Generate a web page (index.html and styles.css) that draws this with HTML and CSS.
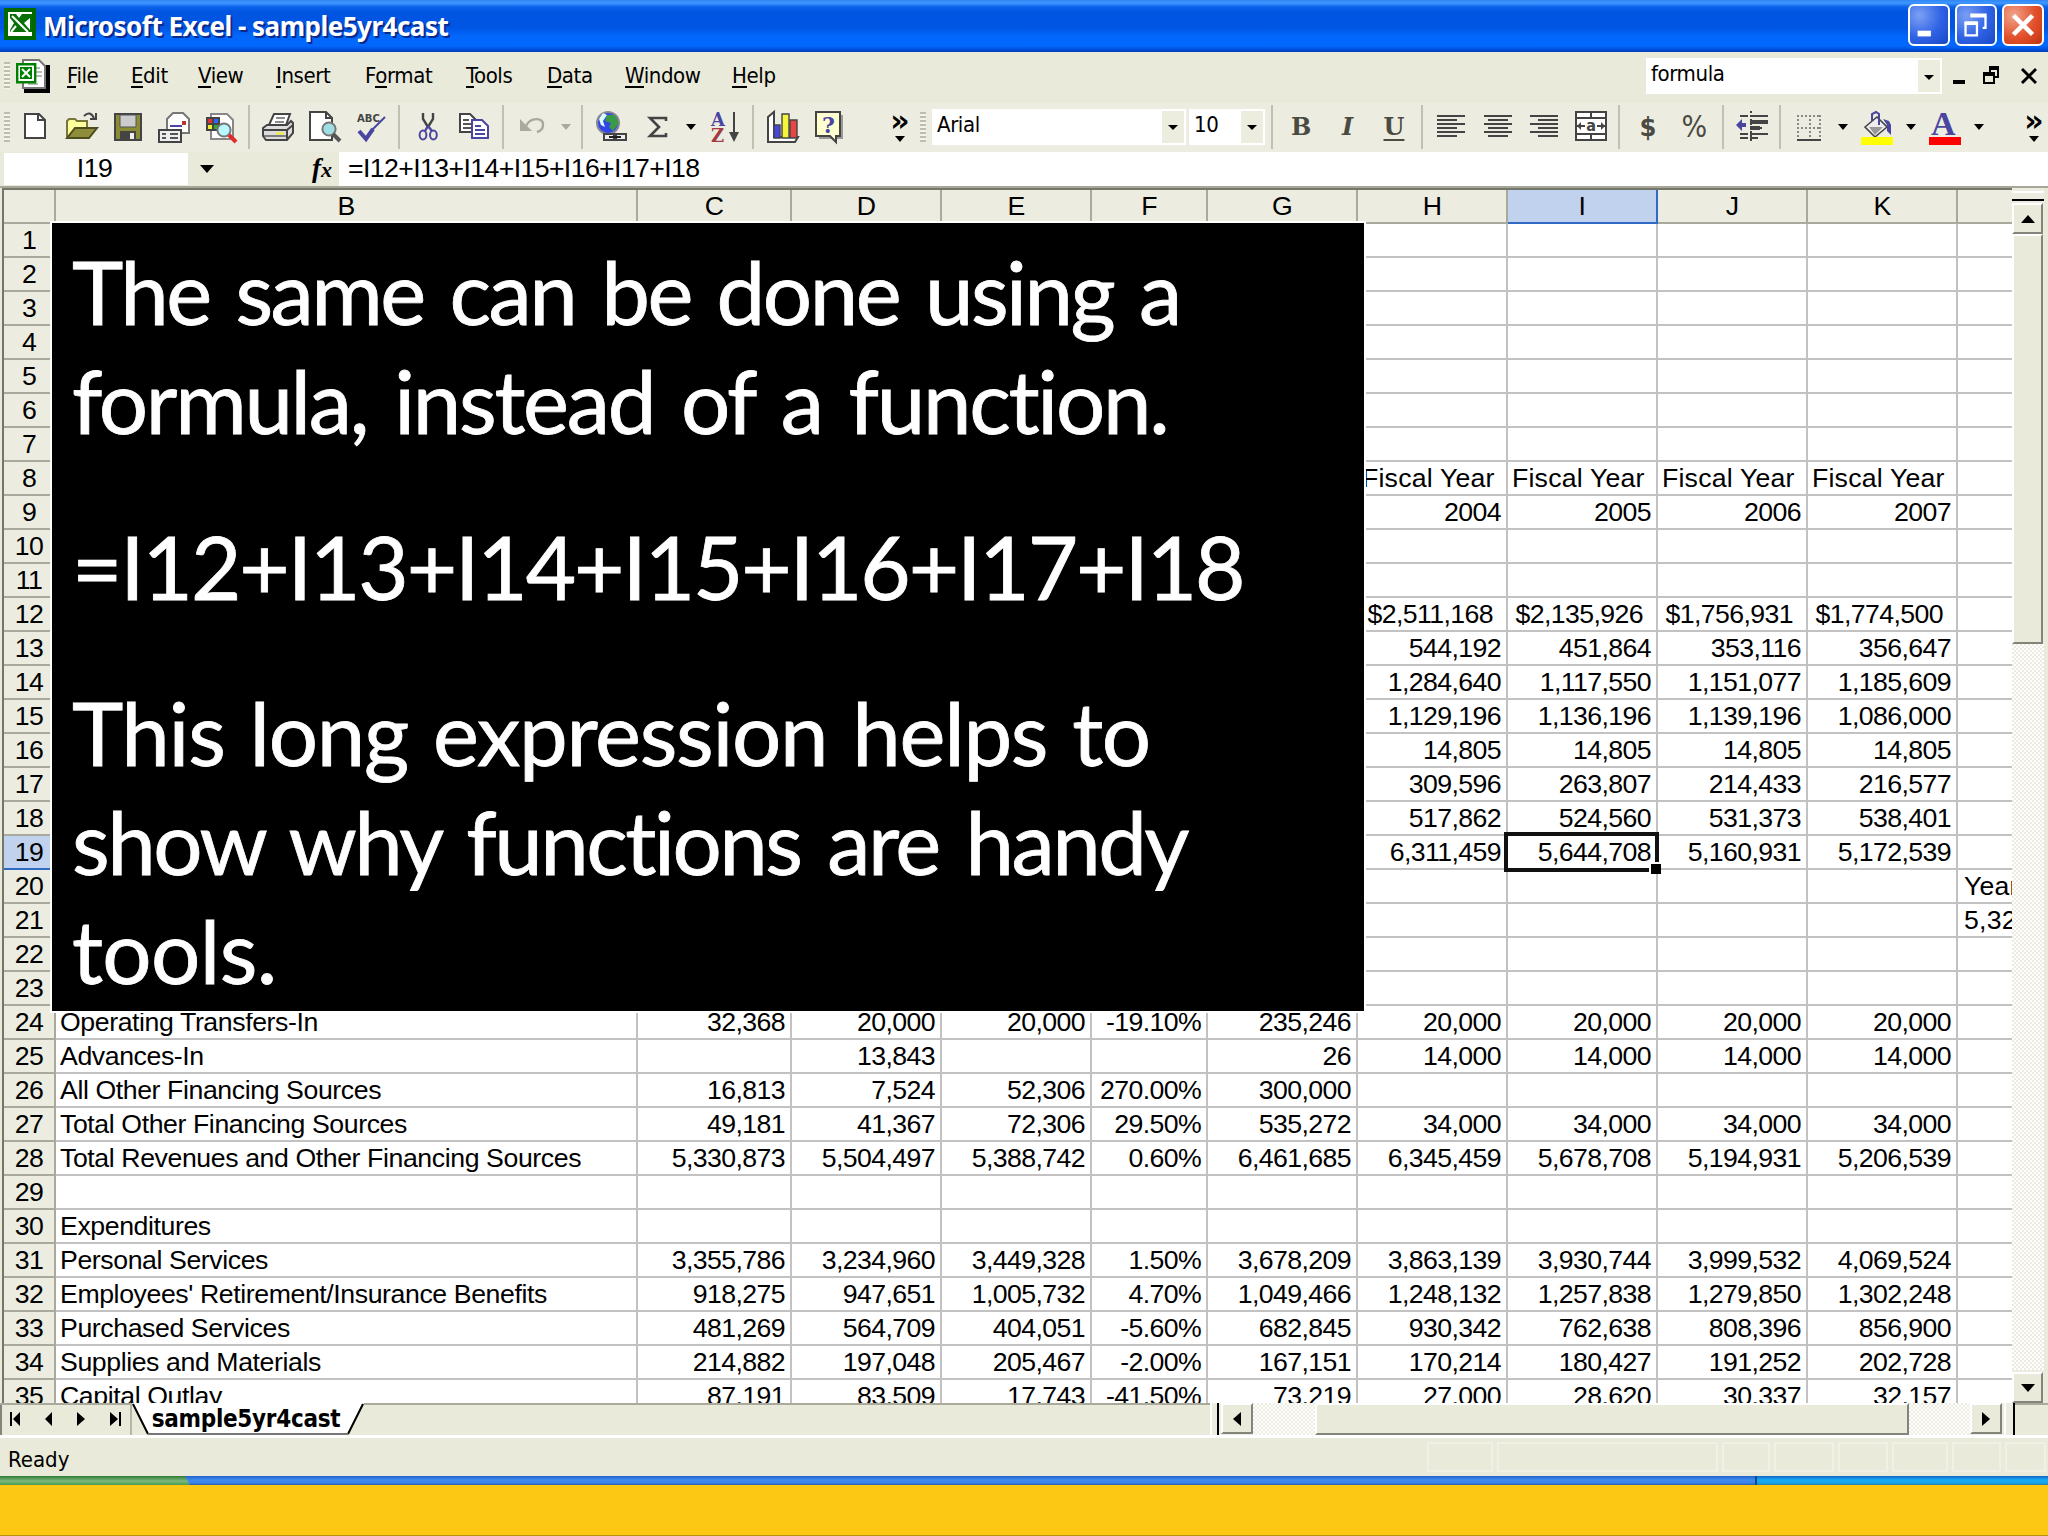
FILE: index.html
```html
<!DOCTYPE html>
<html lang="en">
<head>
    <meta charset="UTF-8">
    <title>Microsoft Excel - sample5yr4cast</title>
    <link rel="stylesheet" href="styles.css">
</head>
<body>
    <header class="titlebar">
        <svg class="app-icon" viewBox="0 0 16 16"><path fill="#006a00" d="M0 0h16v16H0z"/><path fill="#fff" d="M2 2h12v12H2z"/><path fill="#067006" d="M3 3h11v9H3z"/><path fill="#fff" d="M6 3h3L7.500 5zM13 5v6l-3-3.500zM3 5l2 2.500L3 11z"/><path stroke="#fff" stroke-width="1" d="M4 4l8 8M6 9l-2.500 3"/></svg>
        <h1>Microsoft Excel - sample5yr4cast</h1>
        <div class="window-buttons">
            <button class="win"><svg viewBox="0 0 20 20"><path fill="#fff" d="M4 13h7v3H4z"/></svg></button>
            <button class="win"><svg viewBox="0 0 20 20"><path fill="none" stroke="#fff" stroke-width="1.200" d="M4.500 9h6v6.500h-6zM13.500 11.500h1.500v-6"/><path fill="#fff" d="M4 8h7v2H4zM7 4h8.600v2H7z"/></svg></button>
            <button class="win close"><svg viewBox="0 0 20 20"><path stroke="#fff" stroke-width="2.400" d="M5 5l10 10M15 5L5 15"/></svg></button>
        </div>
    </header>

    <nav class="menubar">
        <span class="grip"></span>
        <svg class="doc-icon" viewBox="0 0 17 17"><path d="M5 3h12v14H4v-2h11z"/><path fill="#fff" stroke="#777" d="M3.500.500h8l3 3v11h-11z"/><path stroke="#bbb" d="M10 4.500h2M10 6.500h3M10 8.500h3M6 12.500h5"/><path fill="#fff" stroke="#008000" stroke-width="1.200" d="M.600 2.600h9v9h-9z"/><path fill="#008000" d="M2 4h6v6H2z"/><path stroke="#fff" d="M3 5l4 4M7 5L3 9"/></svg>
        <ul>
            <li class="file"><u>F</u>ile</li>
            <li class="edit"><u>E</u>dit</li>
            <li class="view"><u>V</u>iew</li>
            <li class="insert"><u>I</u>nsert</li>
            <li class="format">F<u>o</u>rmat</li>
            <li class="tools"><u>T</u>ools</li>
            <li class="data"><u>D</u>ata</li>
            <li class="window"><u>W</u>indow</li>
            <li class="help"><u>H</u>elp</li>
        </ul>
        <div class="combo ask">formula<span class="drop"><i class="tri"></i></span></div>
        <svg class="doc-buttons" viewBox="0 0 42 10"><path d="M0 7h6v2H0z"/><path fill="none" stroke="#000" d="M15.500 4.500h5v4h-5zM18.500 3V1.500h4v4H21"/><path d="M15 3h6v2h-6zM18 0h5v2h-5z"/><path stroke="#000" stroke-width="1.500" d="M34.500 1.500l7 7M41.500 1.500l-7 7"/></svg>
    </nav>

    <div class="toolbars">
        <div class="toolbar standard">
            <span class="grip"></span>
            <span class="tool"><svg viewBox="0 0 16 16"><path fill="#fff" stroke="#444" d="M3 1.500h7l3 3v9H3z"/><path fill="none" stroke="#444" d="M9.500 1.500v3H13"/></svg></span>
            <span class="tool"><svg viewBox="0 0 16 16"><path fill="#ffff9c" stroke="#77773a" d="M.500 13V5l1-1h3l1 1h5v3"/><path fill="#8d8d3a" stroke="#4d4d20" d="M.500 13.500l4-5h11l-4 5z"/><path fill="none" stroke="#444" d="M9 2.500q3-3 5 1M15 1v3h-3"/></svg></span>
            <span class="tool"><svg viewBox="0 0 16 16"><path fill="#8b8b35" stroke="#444" d="M1.500 1.500h13v13h-13z"/><path fill="#ccc" stroke="#555" stroke-width=".500" d="M4 2h8v6H4z"/><path fill="#444" d="M4 10h8v4H4z"/><path fill="#eee" d="M9 11h2v3H9z"/></svg></span>
            <span class="tool"><svg viewBox="0 0 16 16"><path fill="#fff" stroke="#777" d="M4.500 11V4l3-3h5l3 3v7z"/><path stroke="#4a45a0" d="M6 7.500h6"/><path fill="#b33" d="M12 5h2v2h-2z"/><path fill="#eee" stroke="#444" d="M.500 9.500h11v6H.500z"/><path stroke="#555" d="M2 11.500h2M2 13.500h2M6 11.500h4M6 13.500h4"/></svg></span>
            <span class="tool"><svg viewBox="0 0 16 16"><path fill="#fff" stroke="#888" d="M3 1.500h8l3 3V14H3z"/><path fill="#444" d="M.500 3h7v7h-7z"/><path fill="#d33" d="M1.500 4h2v2h-2z"/><path fill="#36f" d="M4.500 4h2v2h-2z"/><path fill="#ee3" d="M1.500 7h2v2h-2z"/><path fill="#3a3" d="M4.500 7h2v2h-2z"/><circle cx="9.500" cy="9.500" r="3.300" fill="#b9f8ff" stroke="#777"/><path stroke="#e02b2b" stroke-width="2" d="M12 12l3.500 3.500"/></svg></span>
            <span class="sep"></span>
            <span class="tool"><svg viewBox="0 0 16 16"><path fill="#fff" stroke="#444" d="M3.500 7L6 1.500h8L12 7z"/><path stroke="#666" stroke-width=".800" d="M7 3.500h4.500M6.500 5.500h4.500"/><path fill="#ddd" stroke="#444" d="M.500 8.500l2-1.500h10l2-2 1 1v5l-3 3.500H2l-1.500-2z"/><path fill="none" stroke="#444" d="M.500 9.500h12v4.500M12.500 9.500l3-2.500"/><path stroke="#666" stroke-width=".800" d="M1 12.500h11"/><path stroke="#ee3" d="M7 11.200h4"/></svg></span>
            <span class="tool"><svg viewBox="0 0 16 16"><path fill="#fff" stroke="#444" d="M.500.500h8l3 3v11H.500z"/><path fill="none" stroke="#444" d="M8.500.500v3h3"/><circle cx="10" cy="9" r="3.300" fill="#9fdfe4" stroke="#777"/><path stroke="#555" stroke-width="2" d="M12 11.500l3.500 3.500"/></svg></span>
            <span class="tool"><svg viewBox="0 0 16 16"><text class="abc" x="1" y="5.500">ABC</text><path fill="none" stroke="#4a45a0" stroke-width="2" d="M2 10l3.500 4L9 9"/><path stroke="#4a45a0" d="M8 10l7-7"/></svg></span>
            <span class="sep"></span>
            <span class="tool"><svg viewBox="0 0 16 16"><path fill="none" stroke="#444" stroke-width="1.200" d="M5.500 1v3l2.500 4M10.500 1v3L8 8"/><path fill="none" stroke="#4a45a0" stroke-width="1.200" d="M8 7.500L6.500 10M8 7.500l2 2.500"/><ellipse cx="5.500" cy="12" rx="1.700" ry="2.200" fill="none" stroke="#4a45a0"/><ellipse cx="10.700" cy="12" rx="1.700" ry="2.200" fill="none" stroke="#4a45a0"/></svg></span>
            <span class="tool"><svg viewBox="0 0 16 16"><path fill="#fff" stroke="#444" d="M.500 1.500h5l3 3v6h-8z"/><path stroke="#555" d="M2 4.500h3M2 6.500h4M2 8.500h4"/><path fill="#fff" stroke="#4a45a0" d="M6.500 4.500h5l3 3v6h-8z"/><path stroke="#4a45a0" d="M8 7.500h3M8 9.500h5M8 11.500h5"/></svg></span>
            <span class="sep"></span>
            <span class="tool"><svg viewBox="0 0 16 16"><path fill="#aaa99c" d="M2 4v6h6z"/><path fill="none" stroke="#aaa99c" stroke-width="1.200" d="M5 7.500C7 3 14 3 13.500 7c0 2-1 3-3 3.500"/></svg></span>
            <span class="arrow off"><i class="tri"></i></span>
            <span class="sep"></span>
            <span class="tool"><svg viewBox="0 0 16 16"><circle cx="6.500" cy="6" r="5.500" fill="#3347e8" stroke="#889"/><path fill="#3b9a45" d="M6 2l4 0 2 4-3 4-2-2 1-2-3-1z"/><path fill="#dff" d="M2 4l2-3 2 1-2 3 1 3-2-1z"/><path fill="#eee" stroke="#444" d="M4.500 11.500h5v3h-5zM10.500 11.500h5v3h-5z"/><path stroke="#222" d="M7 13h6"/></svg></span>
            <span class="tool"><svg viewBox="0 0 16 16"><path fill="none" stroke="#444" stroke-width="1.300" d="M12.500 5V3.500h-8L9 8l-4.500 4.500h8V11"/></svg></span>
            <span class="arrow"><i class="tri"></i></span>
            <span class="tool"><svg viewBox="0 0 16 16"><text class="az" x="1" y="7.300">A</text><text class="az zed" x="1" y="15.500">Z</text><path stroke="#444" d="M12.500.500V12"/><path fill="#444" d="M10 10.500h5l-2.500 5z"/></svg></span>
            <span class="sep"></span>
            <span class="tool"><svg viewBox="0 0 16 16"><path fill="#fff" stroke="#444" d="M.500 3l3-2.500V13h12l-1.500 2.500H.500z"/><path fill="#4747e8" stroke="#444" stroke-width=".700" d="M3.500 7h3v6.500h-3z"/><path fill="#f5f53c" stroke="#444" stroke-width=".700" d="M7.500 1.500h3.500v12H7.500z"/><path fill="#e84545" stroke="#444" stroke-width=".700" d="M11.500 4.500h3.500v9h-3.500z"/></svg></span>
            <span class="tool"><svg viewBox="0 0 16 16"><path fill="#999" d="M3 2h12v12H3z"/><path fill="#ffffcf" stroke="#444" d="M1.500.500h12v12h-2v3l-3-3h-7z"/><text class="ask-mark" x="4.500" y="10.800">?</text></svg></span>
            <span class="more"><b>»</b><i class="tri"></i></span>
        </div>
        <div class="toolbar formatting">
            <span class="grip"></span>
            <div class="combo font">Arial<span class="drop"><i class="tri"></i></span></div>
            <div class="combo size">10<span class="drop"><i class="tri"></i></span></div>
            <span class="sep"></span>
            <span class="tool bold">B</span>
            <span class="tool italic">I</span>
            <span class="tool under">U</span>
            <span class="sep"></span>
            <span class="tool"><svg viewBox="0 0 16 16"><path stroke="#444" d="M1 2.500h14M1 4.500h10M1 6.500h14M1 8.500h10M1 10.500h14M1 12.500h10"/></svg></span>
            <span class="tool"><svg viewBox="0 0 16 16"><path stroke="#444" d="M1 2.500h14M3 4.500h10M1 6.500h14M3 8.500h10M1 10.500h14M3 12.500h10"/></svg></span>
            <span class="tool"><svg viewBox="0 0 16 16"><path stroke="#444" d="M1 2.500h14M5 4.500h10M1 6.500h14M5 8.500h10M1 10.500h14M5 12.500h10"/></svg></span>
            <span class="tool"><svg viewBox="0 0 16 16"><path fill="#fff" stroke="#444" d="M.500.500h15v14H.500zM.500 3.500h15M.500 11.500h15M8 .500v3M8 11.500v3"/><path stroke="#444" d="M1 7.500h4M11 7.500h4"/><path fill="#444" d="M1 7.500l2-2v4zM15 7.500l-2-2v4z"/><text class="mini-a" x="5.600" y="10">a</text></svg></span>
            <span class="sep"></span>
            <span class="tool dollar">$</span>
            <span class="tool percent">%</span>
            <span class="sep"></span>
            <span class="tool"><svg viewBox="0 0 16 16"><path stroke="#444" d="M2 2.500h4M7 2.500h9M2 11.500h4M7 11.500h9M2 13.500h4M7 13.500h4M7 8.500h6"/><path stroke="#444" stroke-width="2" d="M7 5.500h9M7 8.500h5"/><path stroke="#444" stroke-dasharray="1 1" d="M7.500 0v16"/><path fill="#4a45a0" d="M0 7l3-3v2h2v2H3v2z"/></svg></span>
            <span class="sep"></span>
            <span class="tool"><svg viewBox="0 0 16 16"><path stroke="#888" stroke-dasharray="1 1" fill="none" d="M2 2.500h12M2 8.500h12M2.500 2v12M8.500 2v12M13.500 2v12"/><path stroke="#444" d="M2 14.500h12"/></svg></span>
            <span class="arrow"><i class="tri"></i></span>
            <span class="tool"><svg viewBox="0 0 16 16"><path fill="#eee" stroke="#444" stroke-width=".800" d="M2 8l6-5 5 5-6 5z"/><path fill="#999" d="M4 8l7 0-4 4z"/><path fill="none" stroke="#4a45a0" d="M5.500 5V1.500l2-1 1.500 1V7"/><path fill="#4a45a0" d="M11 4l3 1 1 2v5l-2-2V7z"/><path fill="#ff0" d="M0 13h16v4H0z"/></svg></span>
            <span class="arrow"><i class="tri"></i></span>
            <span class="tool"><svg viewBox="0 0 16 16"><text class="big-a" x="0" y="12">A</text><path fill="#f00" d="M0 13h16v4H0z"/></svg></span>
            <span class="arrow"><i class="tri"></i></span>
            <span class="more"><b>»</b><i class="tri"></i></span>
        </div>
    </div>

    <div class="formula-bar">
        <div class="name-box">I19</div>
        <i class="tri"></i>
        <span class="fx">f<small>x</small></span>
        <div class="formula">=I12+I13+I14+I15+I16+I17+I18</div>
    </div>

    <main class="workbook">
        <div class="sheet">
            <table>
                <colgroup>
                    <col class="rh"><col class="b"><col class="c"><col><col><col class="f"><col><col><col><col><col><col class="l">
                </colgroup>
                <tr class="cols"><th></th><th>B</th><th>C</th><th>D</th><th>E</th><th>F</th><th>G</th><th>H</th><th class="sel">I</th><th>J</th><th>K</th><th></th></tr>
                <tr><th>1</th><td></td><td></td><td></td><td></td><td></td><td></td><td></td><td></td><td></td><td></td><td></td></tr>
                <tr><th>2</th><td></td><td></td><td></td><td></td><td></td><td></td><td></td><td></td><td></td><td></td><td></td></tr>
                <tr><th>3</th><td></td><td></td><td></td><td></td><td></td><td></td><td></td><td></td><td></td><td></td><td></td></tr>
                <tr><th>4</th><td></td><td></td><td></td><td></td><td></td><td></td><td></td><td></td><td></td><td></td><td></td></tr>
                <tr><th>5</th><td></td><td></td><td></td><td></td><td></td><td></td><td></td><td></td><td></td><td></td><td></td></tr>
                <tr><th>6</th><td></td><td></td><td></td><td></td><td></td><td></td><td></td><td></td><td></td><td></td><td></td></tr>
                <tr><th>7</th><td></td><td></td><td></td><td></td><td></td><td></td><td></td><td></td><td></td><td></td><td></td></tr>
                <tr class="left"><th>8</th><td></td><td></td><td></td><td></td><td></td><td></td><td>Fiscal Year</td><td>Fiscal Year</td><td>Fiscal Year</td><td>Fiscal Year</td><td></td></tr>
                <tr><th>9</th><td></td><td></td><td></td><td></td><td></td><td></td><td>2004</td><td>2005</td><td>2006</td><td>2007</td><td></td></tr>
                <tr><th>10</th><td></td><td></td><td></td><td></td><td></td><td></td><td></td><td></td><td></td><td></td><td></td></tr>
                <tr><th>11</th><td></td><td></td><td></td><td></td><td></td><td></td><td></td><td></td><td></td><td></td><td></td></tr>
                <tr class="money"><th>12</th><td></td><td></td><td></td><td></td><td></td><td></td><td>$2,511,168</td><td>$2,135,926</td><td>$1,756,931</td><td>$1,774,500</td><td></td></tr>
                <tr><th>13</th><td></td><td></td><td></td><td></td><td></td><td></td><td>544,192</td><td>451,864</td><td>353,116</td><td>356,647</td><td></td></tr>
                <tr><th>14</th><td></td><td></td><td></td><td></td><td></td><td></td><td>1,284,640</td><td>1,117,550</td><td>1,151,077</td><td>1,185,609</td><td></td></tr>
                <tr><th>15</th><td></td><td></td><td></td><td></td><td></td><td></td><td>1,129,196</td><td>1,136,196</td><td>1,139,196</td><td>1,086,000</td><td></td></tr>
                <tr><th>16</th><td></td><td></td><td></td><td></td><td></td><td></td><td>14,805</td><td>14,805</td><td>14,805</td><td>14,805</td><td></td></tr>
                <tr><th>17</th><td></td><td></td><td></td><td></td><td></td><td></td><td>309,596</td><td>263,807</td><td>214,433</td><td>216,577</td><td></td></tr>
                <tr><th>18</th><td></td><td></td><td></td><td></td><td></td><td></td><td>517,862</td><td>524,560</td><td>531,373</td><td>538,401</td><td></td></tr>
                <tr><th class="sel">19</th><td></td><td></td><td></td><td></td><td></td><td></td><td>6,311,459</td><td class="active">5,644,708</td><td>5,160,931</td><td>5,172,539</td><td></td></tr>
                <tr class="left"><th>20</th><td></td><td></td><td></td><td></td><td></td><td></td><td></td><td></td><td></td><td></td><td>Year</td></tr>
                <tr class="left"><th>21</th><td></td><td></td><td></td><td></td><td></td><td></td><td></td><td></td><td></td><td></td><td>5,32</td></tr>
                <tr><th>22</th><td></td><td></td><td></td><td></td><td></td><td></td><td></td><td></td><td></td><td></td><td></td></tr>
                <tr><th>23</th><td></td><td></td><td></td><td></td><td></td><td></td><td></td><td></td><td></td><td></td><td></td></tr>
                <tr><th>24</th><td>Operating Transfers-In</td><td>32,368</td><td>20,000</td><td>20,000</td><td>-19.10%</td><td>235,246</td><td>20,000</td><td>20,000</td><td>20,000</td><td>20,000</td><td></td></tr>
                <tr><th>25</th><td>Advances-In</td><td></td><td>13,843</td><td></td><td></td><td>26</td><td>14,000</td><td>14,000</td><td>14,000</td><td>14,000</td><td></td></tr>
                <tr><th>26</th><td>All Other Financing Sources</td><td>16,813</td><td>7,524</td><td>52,306</td><td>270.00%</td><td>300,000</td><td></td><td></td><td></td><td></td><td></td></tr>
                <tr><th>27</th><td>Total Other Financing Sources</td><td>49,181</td><td>41,367</td><td>72,306</td><td>29.50%</td><td>535,272</td><td>34,000</td><td>34,000</td><td>34,000</td><td>34,000</td><td></td></tr>
                <tr><th>28</th><td>Total Revenues and Other Financing Sources</td><td>5,330,873</td><td>5,504,497</td><td>5,388,742</td><td>0.60%</td><td>6,461,685</td><td>6,345,459</td><td>5,678,708</td><td>5,194,931</td><td>5,206,539</td><td></td></tr>
                <tr><th>29</th><td></td><td></td><td></td><td></td><td></td><td></td><td></td><td></td><td></td><td></td><td></td></tr>
                <tr><th>30</th><td>Expenditures</td><td></td><td></td><td></td><td></td><td></td><td></td><td></td><td></td><td></td><td></td></tr>
                <tr><th>31</th><td>Personal Services</td><td>3,355,786</td><td>3,234,960</td><td>3,449,328</td><td>1.50%</td><td>3,678,209</td><td>3,863,139</td><td>3,930,744</td><td>3,999,532</td><td>4,069,524</td><td></td></tr>
                <tr><th>32</th><td>Employees' Retirement/Insurance Benefits</td><td>918,275</td><td>947,651</td><td>1,005,732</td><td>4.70%</td><td>1,049,466</td><td>1,248,132</td><td>1,257,838</td><td>1,279,850</td><td>1,302,248</td><td></td></tr>
                <tr><th>33</th><td>Purchased Services</td><td>481,269</td><td>564,709</td><td>404,051</td><td>-5.60%</td><td>682,845</td><td>930,342</td><td>762,638</td><td>808,396</td><td>856,900</td><td></td></tr>
                <tr><th>34</th><td>Supplies and Materials</td><td>214,882</td><td>197,048</td><td>205,467</td><td>-2.00%</td><td>167,151</td><td>170,214</td><td>180,427</td><td>191,252</td><td>202,728</td><td></td></tr>
                <tr><th>35</th><td>Capital Outlay</td><td>87,191</td><td>83,509</td><td>17,743</td><td>-41.50%</td><td>73,219</td><td>27,000</td><td>28,620</td><td>30,337</td><td>32,157</td><td></td></tr>
            </table>
        </div>
        <div class="vscroll">
            <span class="vsplit"></span>
            <span class="btn"><i class="tri up"></i></span>
            <span class="thumb"></span>
            <span class="track"></span>
            <span class="btn"><i class="tri"></i></span>
        </div>
        <div class="callout">
            <p><span class="l1">The same can be done using a</span><br><span class="l2">formula, instead of a function.</span></p>
            <p><span class="l3">=I12+I13+I14+I15+I16+I17+I18</span></p>
            <p><span class="l4">This long expression helps to</span><br><span class="l5">show why functions are handy</span><br><span class="l6">tools.</span></p>
        </div>
    </main>

    <div class="tabs">
        <svg class="nav" viewBox="0 0 126 32"><path d="M6 9h2v14H6zM16 9v14l-7-7zM48 9v14l-7-7zM73 9v14l8-7zM106 9v14l8-7zM115 9h2v14h-2z"/></svg>
        <div class="tab">
            <svg viewBox="0 0 232 32"><path fill="#fff" d="M0 0h232l-16 31H16z"/><path fill="none" stroke="#000" stroke-width="2" d="M1 1l15 30M231 1l-15 30"/><path stroke="#777" stroke-width="2" d="M16 31h200"/></svg>
            <span>sample5yr4cast</span>
        </div>
        <div class="hscroll">
            <span class="hsplit"></span>
            <span class="btn"><i class="tri prev"></i></span>
            <span class="track short"></span>
            <span class="thumb"></span>
            <span class="track"></span>
            <span class="btn"><i class="tri next"></i></span>
            <span class="hsplit end"></span>
        </div>
    </div>

    <footer class="status">
        <span class="ready">Ready</span>
        <span class="pane p1"></span><span class="pane p2"></span><span class="pane p3"></span><span class="pane p4"></span><span class="pane p5"></span><span class="pane p6"></span><span class="pane p7"></span><span class="pane p8"></span>
    </footer>
    <div class="taskbar"><span class="start"></span><span class="tasks"></span><span class="tray"></span></div>
    <div class="band"></div>
</body>
</html>
```
FILE: styles.css
```css
* {
    box-sizing: border-box;
}
body {
    margin: 0;
    width: 2048px;
    height: 1536px;
    overflow: hidden;
    background: #e9ead9;
    color: #000;
    font-family: "DejaVu Sans Condensed", "DejaVu Sans", sans-serif;
    font-size: 22px;
    display: flex;
    flex-direction: column;
}
svg {
    display: block;
}
.tri {
    border: 6px solid transparent;
    border-top: 6px solid #000;
    border-bottom: 0;
}

/* title bar */
.titlebar {
    height: 52px;
    flex: none;
    display: flex;
    align-items: center;
    padding: 0 4px;
    background: linear-gradient(#2f86f5 0, #4097ff 3px, #0a63ea 7px, #0054e0 12px, #0056e4 28px, #0267fb 36px, #0267fd 46px, #004bd6 50px, #003cb8 52px);
}
.app-icon {
    width: 32px;
    height: 32px;
    margin-top: -4px;
}
.titlebar h1 {
    margin: 0 0 0 7px;
    flex: 1;
    font: bold 26px "Noto Sans", sans-serif;
    letter-spacing: -0.5px;
    color: #fff;
    text-shadow: 2px 2px 0 #0a2a8c;
}
.window-buttons {
    display: flex;
    gap: 5px;
    margin-top: -2px;
}
.win {
    width: 42px;
    height: 42px;
    padding: 0;
    border: 2px solid #fff;
    border-radius: 6px;
    background: radial-gradient(circle at 25% 25%, #7ba0f4, #2f62e4 55%, #1747c4);
}
.win.close {
    background: radial-gradient(circle at 25% 25%, #f0a48c, #e2512c 55%, #c03310);
}

/* menu */
.menubar {
    height: 51px;
    flex: none;
    display: flex;
    align-items: center;
    background: #e9ead9;
}
.grip {
    flex: none;
    width: 6px;
    height: 30px;
    margin-left: 4px;
    background: repeating-linear-gradient(#bdbeae 0 2px, #f4f4e8 2px 4px);
}
.menubar .grip {
    height: 27px;
    margin-top: -4px;
}
.doc-icon {
    width: 34px;
    height: 34px;
    margin: -4px 0 0 6px;
}
.menubar ul {
    display: flex;
    flex: 1;
    margin: 0 0 0 17px;
    padding: 0;
    list-style: none;
    letter-spacing: -0.4px;
    line-height: 48px;
    height: 51px;
}
.menubar u {
    text-decoration: none;
    background: linear-gradient(#000, #000) no-repeat 0 100% / 100% 2px;
}
.file { width: 64px; }
.edit { width: 67px; }
.view { width: 78px; }
.insert { width: 89px; }
.format { width: 101px; }
.tools { width: 81px; }
.data { width: 78px; }
.window { width: 107px; }
.combo {
    flex: none;
    display: flex;
    justify-content: space-between;
    height: 36px;
    padding: 2px 2px 2px 5px;
    line-height: 28px;
    letter-spacing: -0.4px;
    background: #fff;
}
.drop {
    width: 22px;
    background: #ecedde;
    display: flex;
    align-items: center;
    justify-content: center;
}
.drop .tri {
    border-width: 5px 5px 0;
    margin-top: 2px;
}
.ask {
    width: 296px;
    margin: -3px 11px 0 0;
}
.doc-buttons {
    width: 84px;
    height: 20px;
    margin: -3px 11px 0 0;
}

/* toolbars */
.toolbars {
    height: 49px;
    flex: none;
    display: flex;
    padding-bottom: 2px;
    background: #ecede0;
}
.toolbar {
    display: flex;
    align-items: center;
}
.standard {
    width: 916px;
}
.formatting {
    width: 1132px;
}
.standard .grip {
    margin-right: 2px;
}
.tool {
    flex: 0 0 46.4px;
    height: 40px;
    display: flex;
    align-items: center;
    justify-content: center;
    color: #4a4a42;
    font: bold 27px/34px "DejaVu Serif", serif;
}
.tool svg {
    width: 32px;
    height: 32px;
    overflow: visible;
}
.sep {
    flex: 0 0 11px;
    height: 44px;
    background: linear-gradient(90deg, transparent 4px, #c0c1b2 4px 6px, transparent 6px);
}
.arrow {
    flex: 0 0 21.5px;
    display: flex;
    justify-content: center;
}
.arrow .tri {
    border-width: 6px 5px 0;
}
.off .tri {
    border-top-color: #aaa99c;
}
.more {
    flex: none;
    width: 18px;
    margin-left: auto;
    display: flex;
    flex-direction: column;
    align-items: center;
    font: bold 30px/20px "DejaVu Sans", sans-serif;
}
.more .tri {
    border-width: 6px 5px 0;
    margin-top: 5px;
}
.standard .more {
    margin-right: 7px;
}
.formatting .more {
    margin-right: 5px;
}
.font {
    width: 254px;
    margin: 0 3px 0 6px;
}
.size {
    width: 76px;
    margin-right: 2px;
}
.bold, .italic, .under {
    font-size: 24px;
}
.italic {
    font-style: italic;
}
.under {
    text-decoration: underline 2px;
    text-underline-offset: 4px;
}
.dollar, .percent {
    font-family: "DejaVu Sans Condensed", sans-serif;
}
.percent {
    font-size: 30px;
    font-weight: normal;
}
.abc {
    font: bold 5.6px "DejaVu Sans Condensed", sans-serif;
    fill: #444;
}
.az {
    font: bold 9px "DejaVu Serif", serif;
    fill: #4a45a0;
}
.zed {
    fill: #a33b45;
}
.ask-mark {
    font: bold 11px "DejaVu Serif", serif;
    fill: #4a45a0;
}
.mini-a {
    font: bold 8px "DejaVu Sans Condensed", sans-serif;
    fill: #444;
}
.big-a {
    font: bold 17px "Liberation Serif", serif;
    fill: #4a45a0;
    transform: translateX(1px);
}

/* formula bar */
.formula-bar {
    height: 34px;
    flex: none;
    display: flex;
    align-items: center;
    font: 26.67px/32px "Liberation Sans", Arial, sans-serif;
}
.name-box {
    width: 184px;
    height: 32px;
    margin-left: 4px;
    padding-right: 3px;
    line-height: 31px;
    background: #fff;
    text-align: center;
    letter-spacing: -0.6px;
}
.formula-bar .tri {
    margin-left: 12px;
    border-width: 8px 7px 0;
}
.fx {
    margin-left: 98px;
    width: 27px;
    font: italic bold 27px/30px "Liberation Serif", serif;
    white-space: nowrap;
}
.fx small {
    font-size: 22px;
}
.formula {
    flex: 1;
    height: 34px;
    background: #fff;
    padding-left: 9px;
    letter-spacing: -0.6px;
}

/* sheet */
.workbook {
    position: relative;
    height: 1217px;
    flex: none;
    display: flex;
    padding-left: 2px;
    border-top: 2px solid #a6a799;
}
.sheet {
    width: 2010px;
    height: 1215px;
    overflow: hidden;
    border-top: 2px solid #76776b;
    border-left: 2px solid #76776b;
    background: #fff;
}
table {
    width: 2008px;
    table-layout: fixed;
    border-spacing: 0;
    font: 26.67px/31px "Liberation Sans", Arial, sans-serif;
}
col { width: 150px; }
.rh { width: 52px; }
.b { width: 582px; }
.c { width: 154px; }
.f { width: 116px; }
.l { width: 54px; }
td, th {
    height: 34px;
    padding: 1px 5px 0 4px;
    border: solid #c3c1c1;
    border-width: 0 2px 2px 0;
    white-space: nowrap;
    overflow: hidden;
    text-align: right;
    letter-spacing: -0.6px;
}
td:nth-child(2) {
    text-align: left;
    letter-spacing: -0.4px;
}
.left td {
    text-align: left;
    letter-spacing: 0.2px;
}
.money td {
    padding-right: 13px;
}
td:last-child, th:last-child {
    border-right: 0;
}
td:last-child {
    padding-left: 6px;
}
th {
    padding: 1px 0 0;
    font-weight: normal;
    text-align: center;
    background: #ecede0;
    border-color: #a9aa9b;
}
.sel {
    background: #c1d2ee;
    border-color: #316ac5;
}
.active {
    position: relative;
    overflow: visible;
}
.active::before {
    content: "";
    position: absolute;
    inset: -4px -3px -4px -4px;
    border: 4px solid #111;
}
.active::after {
    content: "";
    position: absolute;
    right: -5px;
    bottom: -6px;
    width: 10px;
    height: 10px;
    background: #000;
    box-shadow: -1px -1px 0 1px #fff;
}

/* scrollbars */
.vscroll {
    width: 32px;
    padding-top: 3px;
    display: flex;
    flex-direction: column;
    background: #ecede0;
}
.vsplit {
    height: 10px;
    border-top: 2px solid #fff;
    border-bottom: 2px solid #000;
}
.btn {
    flex: none;
    width: 31px;
    height: 31px;
    display: flex;
    align-items: center;
    justify-content: center;
    background: #e9ead9;
    border: solid;
    border-width: 2px;
    border-color: #fff #84857a #84857a #fff;
}
.vscroll .btn {
    margin-top: 2px;
}
.tri.up {
    border-top: 0;
    border-bottom: 8px solid #000;
}
.vscroll .tri {
    border-left-width: 7px;
    border-right-width: 7px;
}
.btn .tri:not(.up):not(.prev):not(.next) {
    border-top-width: 8px;
}
.tri.prev {
    border: 7px solid transparent;
    border-left: 0;
    border-right: 8px solid #000;
}
.tri.next {
    border: 7px solid transparent;
    border-right: 0;
    border-left: 8px solid #000;
}
.thumb {
    flex: none;
    background: #e9ead9;
    border: solid;
    border-width: 2px;
    border-color: #fff #84857a #84857a #fff;
}
.vscroll .thumb {
    width: 31px;
    height: 410px;
}
.track {
    flex: 1;
    background: repeating-conic-gradient(#fff 0 25%, #ecede0 0 50%) 0 0 / 4px 4px;
}

/* slide text over the sheet */
.callout {
    position: absolute;
    left: 50px;
    top: 33px;
    width: 1316px;
    height: 792px;
    padding: 14px 0 0 20px;
    border: 2px solid #fff;
    background: #000;
    background-clip: padding-box;
    color: #fff;
    font: 87px/109px Lato, "Gill Sans", sans-serif;
    font-variant-ligatures: none;
    -webkit-text-stroke: 0.8px #fff;
    white-space: nowrap;
}
.callout p {
    margin: 0 0 57px;
}
.l1 { letter-spacing: -2.5px; word-spacing: 6px; }
.l2 { letter-spacing: -2.3px; word-spacing: 7px; }
.l3 { letter-spacing: -2.1px; }
.l4 { letter-spacing: -1.3px; word-spacing: 4px; }
.l5 { letter-spacing: -2.5px; word-spacing: 7px; }
.l6 { letter-spacing: -0.6px; }

/* sheet tabs */
.tabs {
    height: 35px;
    flex: none;
    display: flex;
    padding-left: 4px;
    border-bottom: 3px solid #fff;
    box-shadow: inset 0 2px 0 #a9aa9b, inset 2px 0 0 #84857a;
}
.nav {
    width: 128px;
    height: 32px;
    border-right: 2px solid #b5b6a6;
}
.tab {
    position: relative;
    width: 232px;
    height: 32px;
    font-weight: bold;
    font-size: 24px;
    line-height: 32px;
    text-align: center;
    letter-spacing: -0.3px;
}
.tab svg {
    width: 232px;
    height: 32px;
}
.tab span {
    position: absolute;
    inset: 0 4px 0 0;
}
.hscroll {
    width: 805px;
    margin-left: 846px;
    display: flex;
    background: #ecede0;
}
.hsplit {
    width: 9px;
    margin-right: 2px;
    border-left: 2px solid #fff;
    border-right: 2px solid #000;
}
.hsplit.end {
    width: 11px;
    margin: 0 0 0 2px;
}
.hscroll .btn {
    width: 32px;
}
.hscroll .short {
    flex: 0 0 62px;
}
.hscroll .thumb {
    width: 594px;
}

/* bottom of the window */
.status {
    height: 38px;
    flex: none;
    display: flex;
    align-items: center;
}
.ready {
    width: 1419px;
    margin-left: 8px;
    padding-top: 5px;
}
.pane {
    height: 30px;
    margin-right: 4px;
    border: 2px solid #f0f0e4;
}
.p1 { width: 66px; }
.p2 { width: 221px; }
.p3 { width: 48px; }
.p4 { width: 60px; }
.p5 { width: 50px; }
.p6 { width: 56px; }
.p7 { width: 49px; }
.p8 { width: 41px; margin-right: 0; }
.taskbar {
    height: 9px;
    flex: none;
    display: flex;
    background: linear-gradient(#2461cc 0, #3f8cee 4px, #3b83e8 7px, #2b5ca8 9px);
}
.start {
    width: 190px;
    background: linear-gradient(#2f7a35, #7fb97c 5px, #4c9a4c);
    clip-path: polygon(0 0, 185px 0, 190px 100%, 0 100%);
}
.tasks {
    flex: 1;
}
.tray {
    width: 293px;
    border-left: 2px solid #0c4a86;
    background: linear-gradient(#1565c4, #16abf5 4px, #15a4ee 7px, #2b7a9c);
}
.band {
    flex: 1;
    background: #fcc814;
    border-bottom: 1px solid #b8900c;
}
```
